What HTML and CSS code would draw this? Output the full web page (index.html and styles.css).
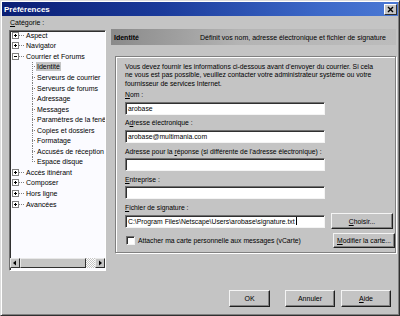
FILE: index.html
```html
<!DOCTYPE html>
<html lang="fr">
<head>
<meta charset="utf-8">
<title>Préférences</title>
<link rel="stylesheet" href="styles.css">
</head>
<body>
<div class="window">
  <div class="titlebar">
    <span class="title">Préférences</span>
    <span class="close"><svg width="13" height="11" viewBox="0 0 13 11"><path d="M4 3l5 5M9 3l-5 5" stroke="#000" stroke-width="1.4"/></svg></span>
  </div>
  <div class="content">
    <div class="columns">
      <div class="left">
        <div class="cat-label"><u>C</u>atégorie :</div>
        <div class="tree">
          <ul class="tree-list">
            <li class="node"><svg class="box" width="7" height="7"><rect x=".5" y=".5" width="6" height="6" fill="#fff" stroke="#808080"/><path d="M2 3.5h3M3.5 2v3" stroke="#000"/></svg><span class="dash"></span><span class="label">Aspect</span></li>
            <li class="node"><svg class="box" width="7" height="7"><rect x=".5" y=".5" width="6" height="6" fill="#fff" stroke="#808080"/><path d="M2 3.5h3M3.5 2v3" stroke="#000"/></svg><span class="dash"></span><span class="label">Navigator</span></li>
            <li class="node"><svg class="box" width="7" height="7"><rect x=".5" y=".5" width="6" height="6" fill="#fff" stroke="#808080"/><path d="M2 3.5h3" stroke="#000"/></svg><span class="dash"></span><span class="label">Courrier et Forums</span></li>
            <li class="child"><span class="twig"></span><span class="label selected">Identité</span></li>
            <li class="child"><span class="twig"></span><span class="label">Serveurs de courrier</span></li>
            <li class="child"><span class="twig"></span><span class="label">Serveurs de forums</span></li>
            <li class="child"><span class="twig"></span><span class="label">Adressage</span></li>
            <li class="child"><span class="twig"></span><span class="label">Messages</span></li>
            <li class="child"><span class="twig"></span><span class="label">Paramètres de la fenêtre</span></li>
            <li class="child"><span class="twig"></span><span class="label">Copies et dossiers</span></li>
            <li class="child"><span class="twig"></span><span class="label">Formatage</span></li>
            <li class="child"><span class="twig"></span><span class="label">Accusés de réception</span></li>
            <li class="child last"><span class="twig"></span><span class="label">Espace disque</span></li>
            <li class="node"><svg class="box" width="7" height="7"><rect x=".5" y=".5" width="6" height="6" fill="#fff" stroke="#808080"/><path d="M2 3.5h3M3.5 2v3" stroke="#000"/></svg><span class="dash"></span><span class="label">Accès itinérant</span></li>
            <li class="node"><svg class="box" width="7" height="7"><rect x=".5" y=".5" width="6" height="6" fill="#fff" stroke="#808080"/><path d="M2 3.5h3M3.5 2v3" stroke="#000"/></svg><span class="dash"></span><span class="label">Composer</span></li>
            <li class="node"><svg class="box" width="7" height="7"><rect x=".5" y=".5" width="6" height="6" fill="#fff" stroke="#808080"/><path d="M2 3.5h3M3.5 2v3" stroke="#000"/></svg><span class="dash"></span><span class="label">Hors ligne</span></li>
            <li class="node"><svg class="box" width="7" height="7"><rect x=".5" y=".5" width="6" height="6" fill="#fff" stroke="#808080"/><path d="M2 3.5h3M3.5 2v3" stroke="#000"/></svg><span class="dash"></span><span class="label">Avancées</span></li>
          </ul>
          <div class="hscroll">
            <span class="sbtn"><svg width="8" height="8"><path d="M5 1.5v5L2 4z" fill="#000"/></svg></span>
            <span class="thumb"></span>
            <span class="track"></span>
            <span class="sbtn"><svg width="8" height="8"><path d="M3 1.5v5L6 4z" fill="#000"/></svg></span>
          </div>
        </div>
      </div>
      <div class="right">
        <div class="header">
          <span class="header-title">Identité</span>
          <span class="header-desc">Définit vos nom, adresse électronique et fichier de signature</span>
        </div>
        <div class="group">
          <p class="intro">Vous devez fournir les informations ci-dessous avant d'envoyer du courrier. Si cela<br>ne vous est pas possible, veuillez contacter votre administrateur système ou votre<br>fournisseur de services Internet.</p>
          <div class="field">
            <div class="flabel"><u>N</u>om :</div>
            <div class="input">arobase</div>
          </div>
          <div class="field">
            <div class="flabel">A<u>d</u>resse électronique :</div>
            <div class="input">arobase@multimania.com</div>
          </div>
          <div class="field">
            <div class="flabel">Adresse pour la <u>r</u>éponse (si différente de l'adresse électronique) :</div>
            <div class="input"></div>
          </div>
          <div class="field">
            <div class="flabel"><u>E</u>ntreprise :</div>
            <div class="input"></div>
          </div>
          <div class="field sig">
            <div class="flabel"><u>F</u>ichier de signature :</div>
            <div class="row">
              <div class="input">C:\Program Files\Netscape\Users\arobase\signature.txt<span class="caret"></span></div>
              <span class="btn side"><u>C</u>hoisir...</span>
            </div>
          </div>
          <div class="row check-row">
            <span class="checkbox"></span>
            <span class="check-label">Attacher ma carte personnelle aux messages (vCarte)</span>
            <span class="btn side"><u>M</u>odifier la carte...</span>
          </div>
        </div>
      </div>
    </div>
    <div class="footer">
      <span class="btn ok">OK</span>
      <span class="btn cancel">Annuler</span>
      <span class="btn help"><u>A</u>ide</span>
    </div>
  </div>
</div>
</body>
</html>
```

FILE: styles.css
```css
* { box-sizing: border-box; }
html, body { margin: 0; padding: 0; }
body {
  width: 400px;
  height: 316px;
  background: #c4c4c4;
  font-family: "Liberation Sans", Arial, sans-serif;
  font-size: 7px;
  color: #000;
  overflow: hidden;
}
u { text-decoration: underline; text-underline-offset: 1px; }

.window {
  width: 400px;
  height: 316px;
  background: #c4c4c4;
  border: 1px solid;
  border-color: #dcdcdc #303030 #303030 #dcdcdc;
  box-shadow: inset 1px 1px 0 #fff, inset -1px -1px 0 #808080;
  padding: 1px;
  display: flex;
  flex-direction: column;
}

.titlebar {
  height: 14px;
  flex: none;
  background: linear-gradient(to right, #0a1e74 0%, #1a3a9a 40%, #3c68c8 80%, #4a78d4 100%);
  display: flex;
  align-items: center;
  justify-content: space-between;
  padding: 0 1px 0 2px;
}
.title {
  color: #fff;
  font-weight: bold;
  font-size: 8px;
}
.close {
  width: 13px;
  height: 11px;
  background: #c4c4c4;
  border: 1px solid;
  border-color: #fff #303030 #303030 #fff;
  display: flex;
  align-items: center;
  justify-content: center;
}
.close svg { display: block; margin: -1px; }

.content {
  flex: 1;
  display: flex;
  flex-direction: column;
  padding: 1px 2px 0 7px;
}
.columns {
  display: flex;
  gap: 5px;
  height: 254px;
}
.left {
  width: 97px;
  display: flex;
  flex-direction: column;
}
.cat-label {
  height: 11px;
  line-height: 11px;
  padding-left: 1px;
  margin-bottom: 2px;
}
.tree {
  height: 241px;
  background: #fbfbff;
  border: 1px solid;
  border-color: #707070 #fff #fff #707070;
  box-shadow: inset 1px 1px 0 #303030;
  display: flex;
  flex-direction: column;
  overflow: hidden;
}
.tree-list {
  list-style: none;
  margin: -1px 0 0;
  padding: 0 0 0 2px;
  flex: 1;
}
.tree-list li {
  height: 10.55px;
  display: flex;
  align-items: center;
  white-space: nowrap;
}
.box { display: block; flex: none; }
.dash {
  width: 5px;
  height: 1px;
  margin: 0 1px 0 0;
  background: repeating-linear-gradient(to right, #808080 0 1px, transparent 1px 2px);
}
.label { padding: 0 1px; line-height: 9px; }
.child { padding-left: 20px; }
.twig {
  width: 4px;
  height: 100%;
  flex: none;
  background:
    repeating-linear-gradient(to bottom, #808080 0 1px, transparent 1px 2px) left top / 1px 100% no-repeat,
    repeating-linear-gradient(to right, #808080 0 1px, transparent 1px 2px) left 50% / 4px 1px no-repeat;
}
.child.last .twig {
  background:
    repeating-linear-gradient(to bottom, #808080 0 1px, transparent 1px 2px) left top / 1px 50% no-repeat,
    repeating-linear-gradient(to right, #808080 0 1px, transparent 1px 2px) left 50% / 4px 1px no-repeat;
}
.selected { background: #c4c4c4; }

.hscroll {
  height: 11px;
  flex: none;
  display: flex;
  margin-bottom: 1px;
}
.sbtn {
  width: 10px;
  height: 10px;
  background: #c4c4c4;
  border: 1px solid;
  border-color: #e8e8e8 #303030 #303030 #e8e8e8;
  display: flex;
  align-items: center;
  justify-content: center;
}
.thumb {
  width: 66px;
  height: 10px;
  background: #c4c4c4;
  border: 1px solid;
  border-color: #e8e8e8 #303030 #303030 #e8e8e8;
}
.track {
  flex: 1;
  height: 10px;
  background: repeating-conic-gradient(#fff 0 25%, #c4c4c4 0 50%) 0 0 / 2px 2px;
}

.right {
  width: 285px;
  display: flex;
  flex-direction: column;
}
.header {
  margin-top: 12px;
  height: 16px;
  display: flex;
  align-items: center;
  justify-content: space-between;
  padding: 0 10px 0 3px;
  background: linear-gradient(to right, #8a8a8a 0%, #9c9c9c 20%, #b4b4b4 45%, #bcbcbc 100%);
}
.header-title { font-weight: bold; font-size: 7px; }

.group {
  margin: 11px 0 0 4px;
  height: 197px;
  border: 1px solid #808080;
  box-shadow: inset 1px 1px 0 #fff, 1px 1px 0 #fff;
  padding: 6px 0 0 9px;
  display: flex;
  flex-direction: column;
  font-size: 6.8px;
}
.intro {
  margin: 0;
  line-height: 8.3px;
  white-space: nowrap;
}
.field { margin-top: 2.2px; }
.field + .field { margin-top: 3.8px; }
.flabel {
  height: 9px;
  line-height: 9px;
  margin-bottom: 2.5px;
  white-space: nowrap;
}
.input {
  width: 200px;
  height: 13px;
  background: #fff;
  border: 1px solid;
  border-color: #707070 #f4f4f4 #f4f4f4 #707070;
  box-shadow: inset 1px 1px 0 #303030;
  padding: 0 2px;
  line-height: 11px;
  white-space: nowrap;
  display: flex;
  align-items: center;
}
.caret {
  width: 1px;
  height: 8px;
  background: #000;
  margin-left: 1px;
}
.row {
  display: flex;
  align-items: center;
}
.sig .row { height: 16px; margin-top: -1.5px; }
.btn {
  height: 16px;
  background: #c4c4c4;
  border: 1px solid;
  border-color: #f4f4f4 #202020 #202020 #f4f4f4;
  box-shadow: inset -1px -1px 0 #808080;
  display: flex;
  align-items: center;
  justify-content: center;
  white-space: nowrap;
}
.side { width: 62px; margin-left: 6px; }
.check-row { margin-top: 3.5px; height: 15px; }
.checkbox {
  width: 9px;
  height: 9px;
  margin-left: 1px;
  background: #fff;
  border: 1px solid;
  border-color: #707070 #f4f4f4 #f4f4f4 #707070;
  box-shadow: inset 1px 1px 0 #303030;
}
.check-label { margin-left: 3px; flex: 1; }
.check-row .side { height: 15px; }

.footer {
  display: flex;
  justify-content: flex-end;
  padding: 19px 5px 0 0;
}
.footer .btn { height: 17px; }
.ok { width: 41px; }
.cancel { width: 50px; margin-left: 15px; }
.help { width: 50px; margin-left: 6px; }
```
